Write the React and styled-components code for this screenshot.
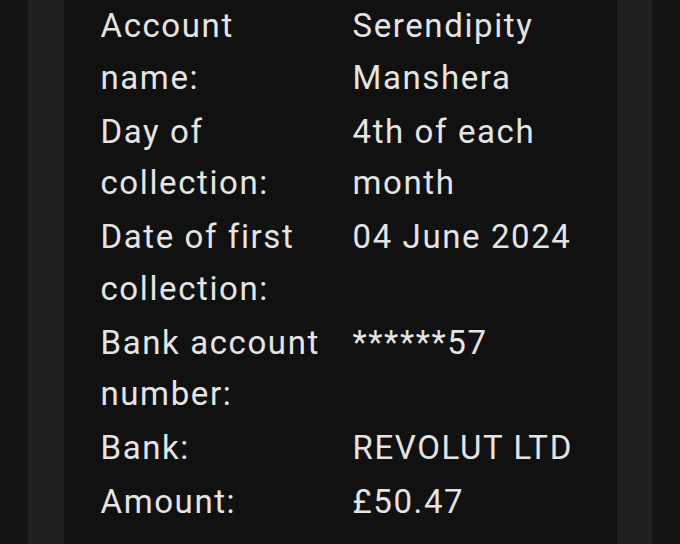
import React from "react";
import styled, { createGlobalStyle } from "styled-components";

const Global = createGlobalStyle`
  html, body { margin: 0; padding: 0; background: #141417; }
  body { font-family: Roboto, "Noto Sans", "Liberation Sans", sans-serif; }
`;

const Screen = styled.div`
  width: 680px;
  height: 544px;
  overflow: hidden;
  display: flex;
  justify-content: center;
  background: #141417;
`;

const Frame = styled.div`
  width: 624px;
  display: flex;
  justify-content: center;
  background: #202022;
`;

const Card = styled.div`
  width: 553px;
  box-sizing: border-box;
  padding: 0 30px 0 37px;
  background: #111111;
`;

const Details = styled.dl`
  margin: 0;
  display: grid;
  grid-template-columns: 252px 1fr;
  row-gap: 2.5px;
  font-size: 33px;
  line-height: 51.5px;
  letter-spacing: 1.6px;
  color: #e4e4e4;
`;

const Label = styled.dt`
  margin: 0;
  padding-right: 20px;
`;

const Value = styled.dd`
  margin: 0;
`;

const rows = [
  ["Account name:", "Serendipity Manshera"],
  ["Day of collection:", "4th of each month"],
  ["Date of first collection:", "04 June 2024"],
  ["Bank account number:", "******57"],
  ["Bank:", "REVOLUT LTD"],
  ["Amount:", "£50.47"],
];

export default function App() {
  return (
    <Screen>
      <Global />
      <Frame>
        <Card>
          <Details>
            {rows.map(([k, v]) => (
              <React.Fragment key={k}>
                <Label>{k}</Label>
                <Value>{v}</Value>
              </React.Fragment>
            ))}
          </Details>
        </Card>
      </Frame>
    </Screen>
  );
}
